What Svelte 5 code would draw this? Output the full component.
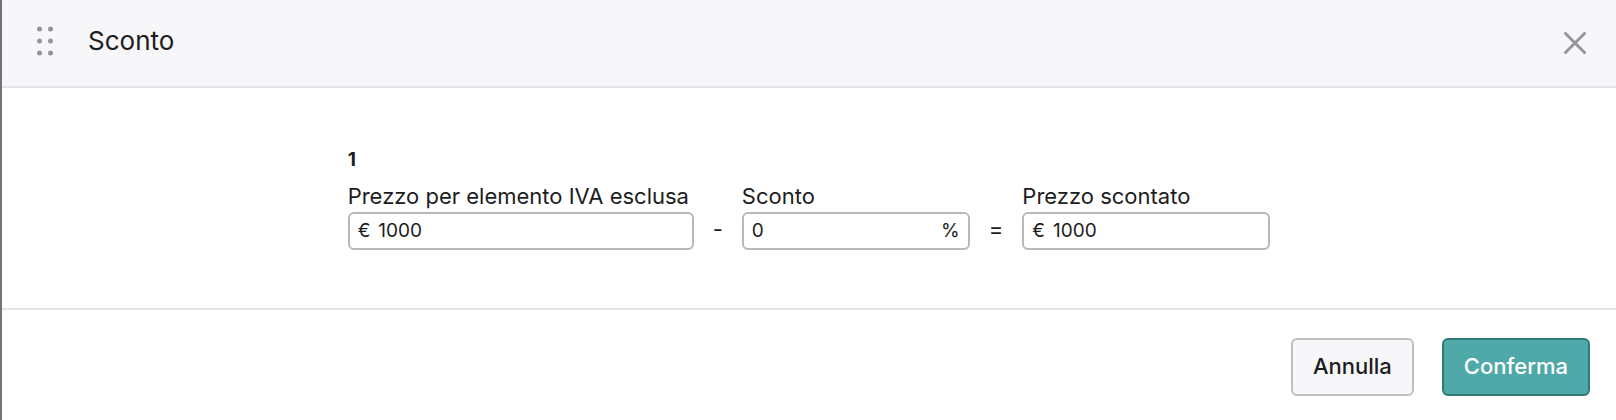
<script>
  let price = 1000;
  let discount = 0;
  let discounted = 1000;

  function updateDiscounted() {
    discounted = price - (price * discount) / 100;
  }

  function updateDiscount() {
    discount = price ? 100 - (discounted * 100) / price : 0;
  }
</script>

<section class="popup">
  <header>
    <svg class="handle" width="18" height="30" viewBox="0 0 18 30" aria-hidden="true">
      {#each [3, 15, 27] as y}
        <circle cx="3.5" cy={y} r="2.5" />
        <circle cx="14.5" cy={y} r="2.5" />
      {/each}
    </svg>
    <h1>Sconto</h1>
    <button class="close" type="button" aria-label="Chiudi">
      <svg width="22" height="22" viewBox="0 0 22 22">
        <path d="M1.5 1.5L20.5 20.5M20.5 1.5L1.5 20.5" />
      </svg>
    </button>
  </header>

  <main>
    <div class="line">
      <strong>1</strong>
      <div class="fields">
        <div class="field price">
          <label for="price">Prezzo per elemento IVA esclusa</label>
          <div class="box">
            <span>€</span>
            <input id="price" type="text" size="1" bind:value={price} on:input={updateDiscounted}>
          </div>
        </div>
        <span class="operator">-</span>
        <div class="field discount">
          <label for="discount">Sconto</label>
          <div class="box">
            <input id="discount" type="text" size="1" bind:value={discount} on:input={updateDiscounted}>
            <span>%</span>
          </div>
        </div>
        <span class="operator">=</span>
        <div class="field discounted">
          <label for="discounted">Prezzo scontato</label>
          <div class="box">
            <span>€</span>
            <input id="discounted" type="text" size="1" bind:value={discounted} on:input={updateDiscount}>
          </div>
        </div>
      </div>
    </div>
  </main>

  <footer>
    <button class="btn" type="button">Annulla</button>
    <button class="btn confirm" type="button">Conferma</button>
  </footer>
</section>

<style>
  :global(body) {
    background: #fff;
  }
  .popup {
    border-left: 2px solid #747477;
    color: #1c1d21;
    font-family: Inter, 'Liberation Sans', sans-serif;
    font-size: 22px;
    line-height: 28px;
  }
  header {
    display: flex;
    align-items: center;
    padding: 24px 30px 28px 34px;
    background: #f7f7fa;
    border-bottom: 2px solid #e4e4e6;
  }
  .handle {
    fill: #96959d;
  }
  h1 {
    margin: 0 auto 0 34px;
    font-size: 26px;
    font-weight: 400;
    line-height: 34px;
  }
  .close {
    display: flex;
    padding: 4px 0 0;
    border: 0;
    background: none;
    cursor: pointer;
  }
  .close svg {
    fill: none;
    stroke: #96959d;
    stroke-width: 3;
    stroke-linecap: round;
  }
  main {
    display: flex;
    justify-content: center;
    padding: 58px 24px;
    border-bottom: 2px solid #e4e4e6;
  }
  strong {
    display: block;
    margin-bottom: 8px;
    font-size: 19px;
  }
  .fields {
    display: flex;
    align-items: flex-end;
  }
  .price {
    width: 346px;
  }
  .discount {
    width: 228px;
  }
  .discounted {
    width: 248px;
  }
  label {
    display: block;
    margin-bottom: 2px;
    white-space: nowrap;
  }
  .box {
    display: flex;
    align-items: center;
    gap: 8px;
    box-sizing: border-box;
    height: 38px;
    padding: 0 8px;
    border: 2px solid #b8b8b8;
    border-radius: 6px;
    font-size: 19px;
  }
  input {
    flex: 1;
    min-width: 0;
    padding: 0;
    border: 0;
    outline: 0;
    background: none;
    color: inherit;
    font: inherit;
  }
  .operator {
    padding: 0 19px 2px;
    line-height: 38px;
  }
  footer {
    display: flex;
    justify-content: flex-end;
    gap: 28px;
    padding: 28px 26px 24px;
  }
  .btn {
    padding: 12px 20px 14px;
    border: 2px solid #bfbfc2;
    border-radius: 6px;
    background: #f7f7fa;
    color: inherit;
    font: inherit;
    font-weight: 500;
    cursor: pointer;
  }
  .confirm {
    border-color: #2f7a76;
    background: #4fa9a8;
    color: #fff;
  }
</style>
